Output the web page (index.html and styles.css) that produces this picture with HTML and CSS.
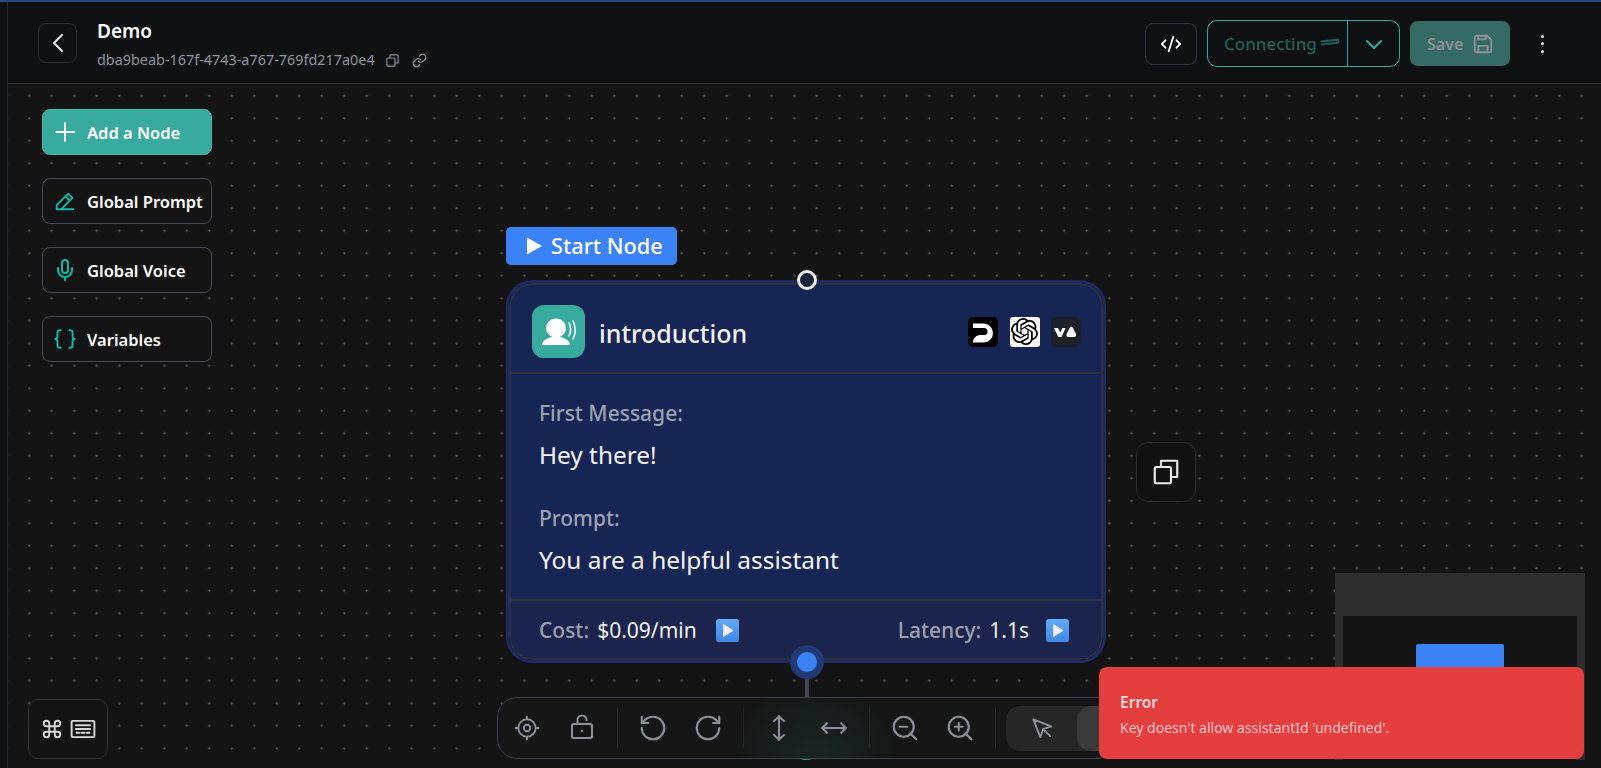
FILE: index.html
```html
<!DOCTYPE html>
<html lang="en">
<head>
<meta charset="utf-8">
<title>Demo</title>
<link rel="stylesheet" href="styles.css">
</head>
<body>
<svg class="defs" width="0" height="0" aria-hidden="true"><defs><linearGradient id="emo" x1="0" y1="0" x2="0" y2="1"><stop offset="0" stop-color="#62acf7"/><stop offset="1" stop-color="#3f86e6"/></linearGradient></defs></svg>
<div class="app">
  <div class="rail"></div>
  <div class="main">
    <header class="topbar">
      <button class="back"><svg class="i24" viewBox="0 0 24 24"><path d="M16 4l-8 8 8 8"/></svg></button>
      <div class="title-block">
        <div class="title">Demo</div>
        <div class="idline">
          <span>dba9beab-167f-4743-a767-769fd217a0e4</span>
          <svg class="i15" viewBox="0 0 24 24"><rect x="3" y="8" width="13" height="13" rx="1.5"/><path d="M8 8V4.500A1.500 1.500 0 0 1 9.500 3h10A1.500 1.500 0 0 1 21 4.500v10a1.500 1.500 0 0 1-1.500 1.500H16"/></svg>
          <svg class="i15 linkicon" viewBox="0 0 24 24"><path d="M10 13a5 5 0 0 0 7.540.54l3-3a5 5 0 0 0-7.070-7.070l-1.720 1.710"/><path d="M14 11a5 5 0 0 0-7.540-.54l-3 3a5 5 0 0 0 7.070 7.070l1.710-1.710"/></svg>
        </div>
      </div>
      <div class="actions">
        <button class="codebtn"><svg class="i22" viewBox="0 0 24 24"><path d="M18 16l4-4-4-4M6 8l-4 4 4 4M14.500 4l-5 16"/></svg></button>
        <div class="split">
          <div class="split-main"><span>Connecting</span><svg class="spin" viewBox="0 0 20 8"><path d="M1.500 3.500L17 1.800a1.500 1.500 0 0 1 .4 3L2 6.500"/></svg></div>
          <div class="split-caret"><svg class="i24" viewBox="0 0 24 24"><path d="M5 9l7 7 7-7"/></svg></div>
        </div>
        <button class="savebtn"><span>Save</span><svg class="i22" viewBox="0 0 24 24"><path d="M5 3h11.500L21 7.500V19a2 2 0 0 1-2 2H5a2 2 0 0 1-2-2V5a2 2 0 0 1 2-2z"/><path d="M7 21v-7h10v7M7 3v4h8V3"/></svg></button>
        <div class="kebab"><i></i><i></i><i></i></div>
      </div>
    </header>

    <section class="canvas">
      <nav class="tools">
        <button class="tool tool-primary"><span class="tool-ic"><svg class="i24" viewBox="0 0 24 24"><path d="M12 3v18M3 12h18"/></svg></span><span>Add a Node</span></button>
        <button class="tool"><span class="tool-ic teal"><svg class="i22" viewBox="0 0 24 24"><path d="M3 21v-4.500L15.500 4l4.500 4.500L8 21H3zM12.500 7l4.500 4.500M3 21h18"/></svg></span><span>Global Prompt</span></button>
        <button class="tool"><span class="tool-ic teal"><svg class="i24" viewBox="0 0 24 24"><path d="M12 2a3 3 0 0 0-3 3v7a3 3 0 0 0 6 0V5a3 3 0 0 0-3-3z"/><path d="M19 10v2a7 7 0 0 1-14 0v-2M12 19v3"/></svg></span><span>Global Voice</span></button>
        <button class="tool"><span class="tool-ic teal"><svg class="i26" viewBox="0 0 24 24"><path d="M8 4H7a2 2 0 0 0-2 2v4a2 2 0 0 1-2 2 2 2 0 0 1 2 2v4c0 1.100.9 2 2 2h1"/><path d="M16 20h1a2 2 0 0 0 2-2v-4c0-1.100.9-2 2-2a2 2 0 0 1-2-2V6a2 2 0 0 0-2-2h-1"/></svg></span><span>Variables</span></button>
      </nav>

      <div class="start-tag"><svg class="play" viewBox="0 0 16 18"><path d="M1 1l14 8-14 8z"/></svg><span>Start Node</span></div>

      <article class="node">
        <div class="node-inner">
          <div class="node-head">
            <div class="avatar"><svg viewBox="0 0 53 53"><ellipse cx="24" cy="23" rx="10" ry="9.500"/><path d="M10 40c0-4 4-6 9-8h10c5 2 9 4 9 8z"/><path class="wave" d="M37 18c2 4 2 9 0 13M41 16c3 6 3 12 0 18"/></svg></div>
            <h2 class="node-title">introduction</h2>
            <div class="logos">
              <span class="logo logo-dg"><svg viewBox="0 0 30 30"><path d="M5 6.500h10.500a9.500 9.500 0 0 1 0 19H5c0-5 3.500-7.500 8-7.500h3a3.500 3.500 0 0 0 0-7H5z"/></svg></span>
              <span class="logo logo-ai"><svg viewBox="0 0 24 24"><path d="M22.282 9.821a5.985 5.985 0 0 0-.516-4.911 6.046 6.046 0 0 0-6.510-2.900A6.065 6.065 0 0 0 4.981 4.182a5.985 5.985 0 0 0-3.998 2.900 6.046 6.046 0 0 0 .743 7.097 5.980 5.980 0 0 0 .511 4.911 6.051 6.051 0 0 0 6.515 2.900A5.985 5.985 0 0 0 13.260 24a6.056 6.056 0 0 0 5.772-4.206 5.989 5.989 0 0 0 3.998-2.900 6.056 6.056 0 0 0-.748-7.073zm-9.022 12.608a4.476 4.476 0 0 1-2.876-1.041l.142-.080 4.778-2.758a.795.795 0 0 0 .393-.681v-6.737l2.020 1.169a.071.071 0 0 1 .038.052v5.583a4.504 4.504 0 0 1-4.495 4.494zm-9.661-4.125a4.471 4.471 0 0 1-.535-3.014l.142.085 4.783 2.758a.771.771 0 0 0 .781 0l5.843-3.369v2.332a.080.080 0 0 1-.033.062L9.740 19.950a4.499 4.499 0 0 1-6.141-1.646zM2.341 7.896a4.485 4.485 0 0 1 2.365-1.973V11.600a.766.766 0 0 0 .388.677l5.815 3.354-2.020 1.169a.076.076 0 0 1-.071 0l-4.830-2.787a4.504 4.504 0 0 1-1.647-6.117zm16.596 3.856L13.104 8.364 15.119 7.200a.076.076 0 0 1 .071 0l4.830 2.791a4.494 4.494 0 0 1-.676 8.105v-5.678a.790.790 0 0 0-.407-.667zm2.011-3.023l-.142-.085-4.774-2.782a.776.776 0 0 0-.785 0L9.409 9.230V6.897a.066.066 0 0 1 .028-.061l4.830-2.787a4.499 4.499 0 0 1 6.680 4.660zM8.307 12.863l-2.020-1.164a.080.080 0 0 1-.038-.057V6.074a4.499 4.499 0 0 1 7.376-3.454l-.142.081L8.704 5.459a.795.795 0 0 0-.393.681zm1.097-2.365l2.602-1.500 2.607 1.500v3l-2.597 1.500-2.607-1.500z"/></svg></span>
              <span class="logo logo-va"><svg viewBox="0 0 30 30"><path d="M3 11h4l2.200 4.500L11.400 11h3.300l-4.200 9H7.300z"/><path d="M20.300 10c1 0 1.500.7 2 1.600l2.600 5.200c.7 1.500 0 3.200-1.600 3.200h-6c-1.600 0-2.300-1.700-1.600-3.200l2.600-5.200c.5-.9 1-1.600 2-1.600z"/></svg></span>
            </div>
          </div>
          <div class="node-body">
            <div class="field">
              <div class="field-label">First Message:</div>
              <div class="field-value">Hey there!</div>
            </div>
            <div class="field">
              <div class="field-label">Prompt:</div>
              <div class="field-value">You are a helpful assistant</div>
            </div>
          </div>
          <div class="node-foot">
            <div class="metric"><span class="metric-label">Cost:</span> <span class="metric-value">$0.09/min</span><svg class="emoji" viewBox="0 0 24 24"><rect width="24" height="24" rx="3"/><path d="M7.500 5l11 7-11 7z"/></svg></div>
            <div class="metric"><span class="metric-label">Latency:</span> <span class="metric-value">1.1s</span><svg class="emoji" viewBox="0 0 24 24"><rect width="24" height="24" rx="3"/><path d="M7.500 5l11 7-11 7z"/></svg></div>
          </div>
        </div>
      </article>

      <span class="handle-top"></span>
      <span class="edge"></span>
      <span class="handle-halo"></span>
      <span class="handle-bottom"></span>
      <span class="next-node"></span>

      <button class="dup"><svg class="i30" viewBox="0 0 24 24"><rect x="3" y="8" width="13" height="13" rx="1"/><path d="M8 8V3h13v13h-5"/></svg></button>

      <button class="kbd">
        <svg class="i22" viewBox="0 0 24 24"><path d="M15 6v12a3 3 0 1 0 3-3H6a3 3 0 1 0 3 3V6a3 3 0 1 0-3 3h12a3 3 0 1 0-3-3"/></svg>
        <svg class="i26" viewBox="0 0 24 24"><rect x="1.500" y="4.500" width="21" height="15" rx="1"/><path d="M5.500 8.500h13M5.500 12h13M6 15.500h2.500M10.500 15.500h3M15.500 15.500H18"/></svg>
      </button>

      <div class="toolbar">
        <div class="tb-group">
          <span class="tb-slot"><svg class="i26" viewBox="0 0 24 24"><circle cx="12" cy="12" r="8"/><circle cx="12" cy="12" r="3"/><path d="M12 1.500V4M12 20v2.500M1.500 12H4M20 12h2.500"/></svg></span>
          <span class="tb-slot"><svg class="i24" viewBox="0 0 24 24"><rect x="2" y="9" width="20" height="14" rx="1.500"/><path d="M7.500 9V5a4.500 4.500 0 0 1 9 0"/><path d="M12 16h.01"/></svg></span>
        </div>
        <i class="tb-sep"></i>
        <div class="tb-group">
          <span class="tb-slot"><svg class="i30" viewBox="0 0 24 24"><path d="M3 12a9 9 0 1 0 9-9 9.750 9.750 0 0 0-6.740 2.740L3 8"/><path d="M3 3v5h5"/></svg></span>
          <span class="tb-slot"><svg class="i30" viewBox="0 0 24 24"><path d="M21 12a9 9 0 1 1-9-9c2.520 0 4.930 1 6.740 2.740L21 8"/><path d="M21 3v5h-5"/></svg></span>
        </div>
        <i class="tb-sep"></i>
        <div class="tb-group">
          <span class="tb-slot"><svg class="i26" viewBox="0 0 24 24"><path d="M12 1v22M7.500 5.500L12 1l4.500 4.500M7.500 18.500L12 23l4.500-4.500"/></svg></span>
          <span class="tb-slot"><svg class="i26" viewBox="0 0 24 24"><path d="M1 12h22M5.500 7.500L1 12l4.500 4.500M18.500 7.500L23 12l-4.500 4.500"/></svg></span>
        </div>
        <i class="tb-sep"></i>
        <div class="tb-group">
          <span class="tb-slot"><svg class="i30" viewBox="0 0 24 24"><circle cx="11" cy="11" r="8"/><path d="M21 21l-4.300-4.300M8 11h6"/></svg></span>
          <span class="tb-slot"><svg class="i30" viewBox="0 0 24 24"><circle cx="11" cy="11" r="8"/><path d="M21 21l-4.300-4.300M11 8v6M8 11h6"/></svg></span>
        </div>
        <i class="tb-sep"></i>
        <div class="segment">
          <span class="seg-cell"><svg class="i26" viewBox="0 0 24 24"><path d="M4 4l6.500 16.500 2.500-7.500 7.500-2.500L4 4zM14 14l5.500 5.500"/></svg></span>
          <span class="seg-cell seg-active"></span>
        </div>
      </div>

      <div class="minimap">
        <div class="mini-view"><div class="mini-node"></div></div>
      </div>

      <div class="toast">
        <div class="toast-title">Error</div>
        <div class="toast-msg">Key doesn't allow assistantId 'undefined'.</div>
      </div>
    </section>
  </div>
</div>
</body>
</html>
```
FILE: styles.css
```css
* { box-sizing: border-box; }
html, body { margin: 0; height: 100%; overflow: hidden; background: #0f1012; }
body { font-family: "Noto Sans", "Open Sans", sans-serif; color: #fff; }
button { font: inherit; color: inherit; background: none; padding: 0; cursor: pointer; }
svg { fill: none; stroke: currentColor; stroke-width: 2; stroke-linecap: round; stroke-linejoin: round; display: block; flex: none; }
.defs { position: absolute; }
.i15 { width: 15px; height: 15px; stroke-width: 1.800; }
.i22 { width: 22px; height: 22px; }
.i24 { width: 24px; height: 24px; }
.i26 { width: 26px; height: 26px; stroke-width: 1.800; }
.i30 { width: 30px; height: 30px; stroke-width: 1.700; }
.teal { color: #14b8a6; }

.app { display: flex; height: 768px; border-top: 2px solid #26477c; }
.rail { width: 8px; flex: none; background: #0f1012; border-right: 1px solid #2a2c31; }
.main { flex: 1; min-width: 0; display: flex; flex-direction: column; }

.topbar { height: 82px; flex: none; display: flex; align-items: center; padding: 0 57px 0 30px; background: #0f1012; border-bottom: 1px solid #2a2c30; }
.back { width: 39px; height: 40px; display: flex; align-items: center; justify-content: center; border: 1px solid #2a2c32; border-radius: 8px; color: #e5e7eb; }
.title-block { margin: 3px 0 0 20px; display: flex; flex-direction: column; gap: 8px; }
.title { font-size: 19px; font-weight: 600; line-height: 24px; }
.idline { display: flex; align-items: center; font-size: 14.400px; line-height: 18px; color: #8b93a1; }
.idline .i15 { margin-left: 10px; }
.idline .linkicon { margin-left: 12px; }
.actions { margin: 2px 0 0 auto; display: flex; align-items: center; }
.codebtn { width: 52px; height: 42px; display: flex; align-items: center; justify-content: center; border: 1px solid #2b3042; border-radius: 8px; margin-right: 10px; }
.split { width: 193px; height: 47px; display: flex; border: 1px solid #2fa99b; border-radius: 10px; margin-right: 10px; }
.split-main { flex: 1; display: flex; align-items: center; gap: 3px; padding-left: 16px; border-right: 1px solid #2fa99b; color: #1f5f59; font-size: 17px; font-weight: 500; }
.spin { width: 20px; height: 8px; stroke-width: 2; margin-top: -3px; }
.split-caret { width: 51px; display: flex; align-items: center; justify-content: center; color: #2fa99b; }
.savebtn { width: 100px; height: 45px; display: flex; align-items: center; gap: 9px; padding-left: 17px; border: none; border-radius: 8px; background: #366a65; color: #8d9392; font-size: 16px; font-weight: 600; }
.kebab { margin-left: 31px; width: 3px; display: flex; flex-direction: column; gap: 4.500px; }
.kebab i { width: 3px; height: 3px; border-radius: 50%; background: #e5e7eb; }

.canvas { position: relative; flex: 1; min-height: 0; overflow: hidden; background-color: #141414; background-image: radial-gradient(circle, #4e4e4e 1px, transparent 1.300px); background-size: 22.5px 22.5px; background-position: 10px 0.5px; }

.tools { position: absolute; left: 34px; top: 25px; display: flex; flex-direction: column; gap: 23px; }
.tool { width: 170px; height: 46px; display: flex; align-items: center; gap: 10px; padding-left: 10px; border: 1px solid #434a58; border-radius: 8px; background: #141414; font-size: 16.500px; font-weight: 600; white-space: nowrap; }
.tool-primary { background: #38ab9e; border-color: #4bb5a9; }
.tool-ic { width: 24px; height: 24px; flex: none; display: flex; align-items: center; justify-content: center; }

.start-tag { position: absolute; left: 498px; top: 143px; width: 171px; height: 38px; display: flex; align-items: center; gap: 8px; padding: 0 0 1px 20px; background: #3b82f6; border-radius: 5px; font-size: 21.700px; font-weight: 500; white-space: nowrap; }
.play { width: 17px; height: 20px; fill: #fff; stroke: none; }

.node { position: absolute; left: 498px; top: 196px; width: 600px; height: 383px; border: 3px solid #1c2a63; border-radius: 26px; overflow: hidden; }
.node-inner { height: 100%; display: flex; flex-direction: column; border: 2px solid #2c2f3c; border-radius: 23px; background: #172554; overflow: hidden; }
.node-head { height: 89px; flex: none; display: flex; align-items: center; padding: 6px 20px 0 21px; border-bottom: 2px solid #2c2f3c; }
.avatar { width: 53px; height: 53px; border-radius: 12px; background: #38ab9e; }
.avatar svg { width: 53px; height: 53px; fill: #fff; stroke: none; }
.avatar .wave { fill: none; stroke: #fff; stroke-width: 1.500; }
.node-title { margin: 2px 0 0 14px; font-size: 25px; font-weight: 500; line-height: 32px; color: #f3f4f6; }
.logos { margin-left: auto; display: flex; gap: 11.500px; }
.logo { width: 30px; height: 30px; border-radius: 5px; display: flex; align-items: center; justify-content: center; }
.logo-dg { background: #000; }
.logo-dg svg { width: 30px; height: 30px; fill: #fff; stroke: none; }
.logo-ai { background: #fff; border-radius: 3px; }
.logo-ai svg { width: 27px; height: 27px; fill: #000; stroke: none; }
.logo-va { background: #1c2029; }
.logo-va svg { width: 30px; height: 30px; fill: #fff; stroke: none; }

.node-body { height: 225px; flex: none; padding: 23px 28px 0 28px; display: flex; flex-direction: column; gap: 31px; }
.field-label { font-size: 21px; line-height: 32px; color: #9ca3af; font-weight: 500; }
.field-value { font-size: 24.400px; line-height: 32px; margin-top: 10px; color: #f3f4f6; }

.node-foot { flex: 1; display: flex; align-items: center; justify-content: space-between; padding: 1px 32px 0 28px; background: #1a244c; border-top: 2px solid #2c2f3c; font-size: 21px; }
.metric { display: flex; align-items: center; gap: 8px; }
.metric-label { color: #9ca3af; font-weight: 500; }
.metric-value { color: #f3f4f6; }
.emoji { width: 23px; height: 23px; margin-left: 11px; stroke: none; fill: #f3edff; }
.metric + .metric .emoji { margin-left: 9px; }
.emoji rect { fill: url(#emo); }

.handle-top { position: absolute; left: 788.500px; top: 186px; width: 20px; height: 20px; border: 3px solid #f1f1f1; border-radius: 50%; background: #172036; }
.edge { position: absolute; left: 797px; top: 580px; width: 4px; height: 40px; background: #41454f; }
.handle-halo { position: absolute; left: 781.500px; top: 561px; width: 34px; height: 34px; border-radius: 50%; background: #203a74; }
.handle-bottom { position: absolute; left: 788.500px; top: 568px; width: 20px; height: 20px; border-radius: 50%; background: #3b82f6; }
.next-node { position: absolute; left: 784px; top: 656px; width: 28px; height: 20px; border-radius: 50%; background: #26a08f; }

.dup { position: absolute; left: 1128px; top: 358px; width: 60px; height: 60px; display: flex; align-items: center; justify-content: center; border: 1px solid #2d2d2d; border-radius: 12px; background: #111; color: #ededed; }
.kbd { position: absolute; left: 20px; top: 615px; width: 80px; height: 60px; display: flex; align-items: center; justify-content: center; gap: 7px; border: 1px solid #2f2f2f; border-radius: 10px; background: #141414; color: #d8d8d8; }

.toolbar { position: absolute; left: 489px; top: 613px; width: 620px; height: 62px; display: flex; align-items: center; padding-left: 10px; border: 1px solid #3a3f4c; border-radius: 20px; background: radial-gradient(circle at 317px 62px, #1a2624 0, #161616 80px); color: #8d9098; overflow: hidden; }
.tb-group { display: flex; gap: 18px; flex: none; }
.tb-slot { width: 37px; display: flex; justify-content: center; }
.tb-sep { width: 1px; height: 40px; flex: none; margin: 0 16px 0 17px; background: #242424; }
.segment { flex: none; margin-left: -6px; height: 45px; width: 140px; display: flex; background: #262626; border-radius: 14px; }
.seg-cell { width: 71px; flex: none; display: flex; align-items: center; justify-content: center; }
.seg-active { background: #3a3a3a; border-radius: 14px; }

.minimap { position: absolute; left: 1327px; top: 489px; width: 250px; height: 187px; padding: 43px 8px 0; background: #2d2d2d; }
.mini-view { height: 100%; padding-top: 28px; background: #141414; display: flex; justify-content: center; }
.mini-node { width: 88px; height: 60px; background: #3b82f6; border-radius: 2px; }

.toast { position: absolute; left: 1091px; top: 583px; width: 485px; height: 92px; padding: 23px 21px 0; background: #e53e3e; border-radius: 8px; }
.toast-title { font-size: 15.500px; font-weight: 600; line-height: 24px; color: #fcd9d9; }
.toast-msg { font-size: 14px; line-height: 20px; margin-top: 4px; color: #fcc4c4; }
```
